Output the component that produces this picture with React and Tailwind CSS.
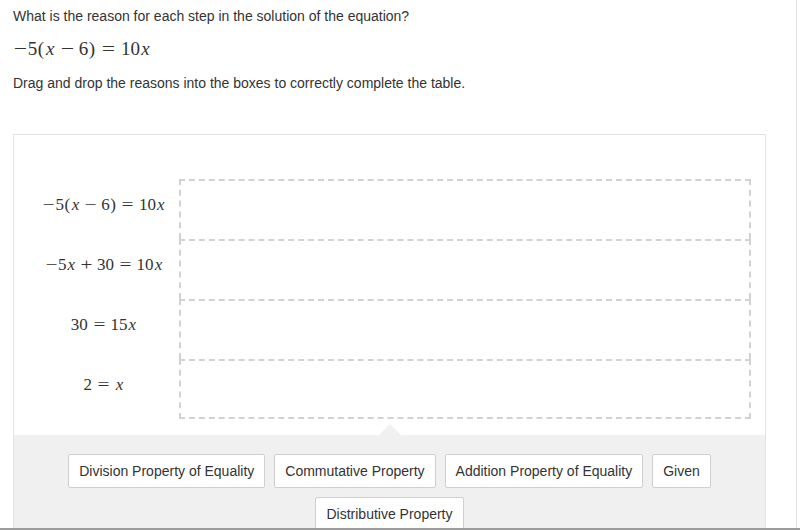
import React from "react";

// Computer Modern-like metrics on top of Liberation Serif
const Bin = ({ children }) => (
  <span className="inline-block w-[0.778em] mx-[0.222em] text-center scale-x-125">{children}</span>
);
const Rel = ({ children }) => (
  <span className="inline-block w-[0.778em] mx-[0.278em] text-center scale-x-125">{children}</span>
);
const Neg = () => <span className="inline-block w-[0.778em] text-center scale-x-125">−</span>;
const P = ({ children }) => (
  <span className="inline-block w-[0.389em] text-center">{children}</span>
);
const X = () => <i className="inline-block w-[0.572em] text-center italic">x</i>;

const steps = [
  <><Neg />5<P>(</P><X /><Bin>−</Bin>6<P>)</P><Rel>=</Rel>10<X /></>,
  <><Neg />5<X /><Bin>+</Bin>30<Rel>=</Rel>10<X /></>,
  <>30<Rel>=</Rel>15<X /></>,
  <>2<Rel>=</Rel><X /></>,
];

const reasons = [
  "Division Property of Equality",
  "Commutative Property",
  "Addition Property of Equality",
  "Given",
  "Distributive Property",
];

export default function App() {
  return (
    <div className="w-[800px] h-[530px] overflow-hidden bg-white border-b-2 border-[#9c9c9c]">
      <div className="w-[797px] h-full border-r border-[#e3e3e3] font-['Liberation_Sans',Arial,sans-serif] text-[14px] text-[#333]">
        {/* Question */}
        <div className="pl-[13px] pt-[6px]">
          <p className="leading-[20px]">What is the reason for each step in the solution of the equation?</p>
          <p className="mt-[12px] leading-[22px] text-[19px] font-['Liberation_Serif',serif] whitespace-nowrap">
            {steps[0]}
          </p>
          <p className="mt-[13px] leading-[20px]">Drag and drop the reasons into the boxes to correctly complete the table.</p>
        </div>

        {/* Card */}
        <div className="ml-[13px] mt-[41px] w-[753px] border border-[#e3e3e3] relative">
          <div className="pt-[44px] pl-[15px] pr-[14px] pb-[16px]">
            {steps.map((s, i) => (
              <div key={i} className="flex">
                <div className="w-[150px] flex items-center justify-center pb-[8px] text-[17px] font-['Liberation_Serif',serif] whitespace-nowrap">
                  <span>{s}</span>
                </div>
                <div
                  className={`flex-1 h-[60px] border-l-2 border-r-2 border-t-2 border-dashed border-[#d2d2d2] ${
                    i === steps.length - 1 ? "border-b-2" : ""
                  }`}
                />
              </div>
            ))}
          </div>

          {/* Reasons tray */}
          <div className="relative bg-[#f0f0f0] pt-[19px] pb-[20px] flex flex-wrap justify-center gap-[9px] px-[40px]">
            <div className="absolute -top-[11px] left-[365px] w-0 h-0 border-l-[11px] border-r-[11px] border-b-[11px] border-l-transparent border-r-transparent border-b-[#f0f0f0]" />
            {reasons.map((r) => (
              <button
                key={r}
                className="h-[34px] px-[10px] bg-white border border-[#cfcfcf] rounded-[2px] text-[14px] text-[#333]"
              >
                {r}
              </button>
            ))}
          </div>
        </div>
      </div>
    </div>
  );
}
